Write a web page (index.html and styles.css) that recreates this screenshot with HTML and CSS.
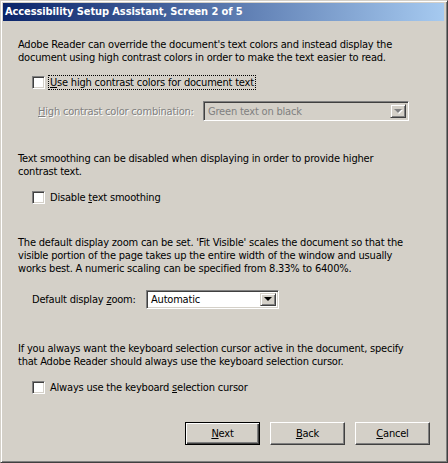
FILE: index.html
```html
<!DOCTYPE html>
<html lang="en">
<head>
    <meta charset="UTF-8">
    <title>Accessibility Setup Assistant</title>
    <link rel="stylesheet" href="styles.css">
</head>
<body>
    <div class="window">
        <div class="titlebar">Accessibility Setup Assistant, Screen 2 of 5</div>

        <div class="content">
            <!-- high contrast -->
            <p class="intro">Adobe Reader can override the document's text colors and instead display the<br>document using high contrast colors in order to make the text easier to read.</p>
            <label class="check check-first">
                <span class="box"></span>
                <span class="focus"><u>U</u>se high contrast colors for document text</span>
            </label>
            <div class="field field-contrast">
                <span class="field-label disabled"><u>H</u>igh contrast color combination:</span>
                <div class="combo combo-contrast is-disabled">
                    <span class="combo-value">Green text on black</span>
                    <span class="combo-arrow"><span class="tri"></span></span>
                </div>
            </div>

            <!-- smoothing -->
            <p class="intro section">Text smoothing can be disabled when displaying in order to provide higher<br>contrast text.</p>
            <label class="check">
                <span class="box"></span>
                <span class="label">Disable <u>t</u>ext smoothing</span>
            </label>

            <!-- zoom -->
            <p class="intro section">The default display zoom can be set. 'Fit Visible' scales the document so that the<br>visible portion of the page takes up the entire width of the window and usually<br>works best. A numeric scaling can be specified from 8.33% to 6400%.</p>
            <div class="field field-zoom">
                <span class="field-label">Default display <u>z</u>oom:</span>
                <div class="combo combo-zoom">
                    <span class="combo-value">Automatic</span>
                    <span class="combo-arrow"><span class="tri"></span></span>
                </div>
            </div>

            <!-- keyboard cursor -->
            <p class="intro section">If you always want the keyboard selection cursor active in the document, specify<br>that Adobe Reader should always use the keyboard selection cursor.</p>
            <label class="check">
                <span class="box"></span>
                <span class="label">Always use the keyboard <u>s</u>election cursor</span>
            </label>

            <div class="buttons">
                <button class="btn btn-default"><u>N</u>ext</button>
                <button class="btn"><u>B</u>ack</button>
                <button class="btn"><u>C</u>ancel</button>
            </div>
        </div>
    </div>
</body>
</html>
```

FILE: styles.css
```css
body {
    margin: 0;
    padding: 0;
    background-color: #d4d0c8;
    font-family: 'DejaVu Sans Condensed', 'DejaVu Sans', sans-serif;
    font-size: 11px;
    letter-spacing: -0.2px;
    color: #000;
}

.window {
    width: 448px;
    height: 463px;
    box-sizing: border-box;
    border-top: 1px solid #d4d0c8;
    border-left: 1px solid #d4d0c8;
    border-right: 1px solid #404040;
    border-bottom: 1px solid #404040;
    padding: 2px 3px 2px 2px;
    box-shadow: inset 1px 1px 0 #fff, inset -1px -1px 0 #808080;
    background-color: #d4d0c8;
}

.titlebar {
    height: 18px;
    line-height: 18px;
    padding-left: 2px;
    background: linear-gradient(to right, #0a246a, #a6caf0);
    color: #fff;
    font-weight: bold;
    letter-spacing: -0.1px;
    white-space: nowrap;
}

.content {
    padding: 0 13px 0 15px;
}

.intro {
    margin: 17px 0 0;
    line-height: 13px;
}

.intro.section {
    margin-top: 31px;
}

.field-zoom + .intro.section {
    margin-top: 33px;
}

.check {
    display: flex;
    align-items: center;
    height: 15px;
    margin: 12px 0 0 14px;
}

.check-first {
    margin-top: 11px;
}

.box {
    width: 13px;
    height: 13px;
    box-sizing: border-box;
    background-color: #fff;
    border-top: 1px solid #808080;
    border-left: 1px solid #808080;
    border-right: 1px solid #fff;
    border-bottom: 1px solid #fff;
    box-shadow: inset 1px 1px 0 #404040, inset -1px -1px 0 #d4d0c8;
    margin-right: 3px;
}

.focus,
.label {
    line-height: 13px;
    padding: 0 1px;
    border: 1px dotted transparent;
}

.focus {
    border-color: #000;
}

.field {
    display: flex;
    align-items: center;
}

.field-contrast {
    margin: 11px 0 0 20px;
    height: 20px;
}

.field-contrast .field-label {
    width: 165px;
}

.field-zoom {
    margin: 14px 0 0 14px;
    height: 20px;
}

.field-zoom .field-label {
    width: 114px;
}

.field-label.disabled {
    color: #808080;
    text-shadow: 1px 1px 0 #fff;
}

.combo {
    display: flex;
    align-items: center;
    box-sizing: border-box;
    background-color: #fff;
    border-top: 1px solid #808080;
    border-left: 1px solid #808080;
    border-right: 1px solid #fff;
    border-bottom: 1px solid #fff;
    box-shadow: inset 1px 1px 0 #404040, inset -1px -1px 0 #d4d0c8;
    padding: 2px;
}

.combo-contrast {
    width: 206px;
    height: 20px;
}

.combo-zoom {
    width: 133px;
    height: 19px;
}

.combo.is-disabled {
    background-color: #d4d0c8;
    color: #808080;
}

.combo-value {
    flex: 1;
    padding-left: 2px;
    white-space: nowrap;
}

.combo-arrow {
    width: 16px;
    height: 100%;
    box-sizing: border-box;
    display: flex;
    align-items: center;
    justify-content: center;
    background-color: #d4d0c8;
    border-top: 1px solid #d4d0c8;
    border-left: 1px solid #d4d0c8;
    border-right: 1px solid #404040;
    border-bottom: 1px solid #404040;
    box-shadow: inset 1px 1px 0 #fff, inset -1px -1px 0 #808080;
}

.tri {
    width: 0;
    height: 0;
    border-left: 4px solid transparent;
    border-right: 4px solid transparent;
    border-top: 4px solid #000;
}

.is-disabled .tri {
    border-top-color: #808080;
    filter: drop-shadow(1px 1px 0 #fff);
}

.buttons {
    display: flex;
    justify-content: flex-end;
    gap: 10px;
    margin-top: 27px;
    padding-right: 1px;
}

.btn {
    width: 75px;
    height: 23px;
    box-sizing: border-box;
    font-family: inherit;
    font-size: 11px;
    letter-spacing: inherit;
    color: #000;
    background-color: #d4d0c8;
    border-top: 1px solid #fff;
    border-left: 1px solid #fff;
    border-right: 1px solid #404040;
    border-bottom: 1px solid #404040;
    box-shadow: inset -1px -1px 0 #808080;
    padding: 0;
}

.btn-default {
    border: 1px solid #000;
    box-shadow: inset 1px 1px 0 #fff, inset -1px -1px 0 #404040, inset -2px -2px 0 #808080;
}
```
